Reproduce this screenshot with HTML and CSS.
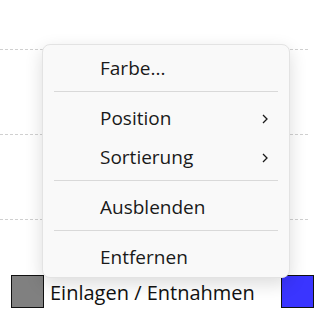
FILE: index.html
```html
<!DOCTYPE html>
<html lang="de">
<head>
    <meta charset="UTF-8">
    <title>Diagramm - Kontextmenü</title>
    <link rel="stylesheet" href="styles.css">
</head>
<body>
    <div class="chart">
        <!-- Plot area with grid lines -->
        <div class="plot">
            <div class="grid-row"></div>
            <div class="grid-row"></div>
            <div class="grid-row last"></div>
        </div>

        <!-- Legend -->
        <div class="legend">
            <div class="legend-item">
                <span class="swatch gray"></span>
                <span class="legend-label">Einlagen / Entnahmen</span>
            </div>
            <div class="legend-item">
                <span class="swatch blue"></span>
            </div>
        </div>

        <!-- Context menu -->
        <div class="context-menu">
            <div class="menu-item">Farbe...</div>
            <div class="menu-sep"></div>
            <div class="menu-item">Position
                <svg class="chevron" width="6" height="10" viewBox="0 0 6 10"><path d="M1 1 L5 5 L1 9" fill="none" stroke="#1a1a1a" stroke-width="1.3"/></svg>
            </div>
            <div class="menu-item">Sortierung
                <svg class="chevron" width="6" height="10" viewBox="0 0 6 10"><path d="M1 1 L5 5 L1 9" fill="none" stroke="#1a1a1a" stroke-width="1.3"/></svg>
            </div>
            <div class="menu-sep"></div>
            <div class="menu-item">Ausblenden</div>
            <div class="menu-sep"></div>
            <div class="menu-item">Entfernen</div>
        </div>
    </div>
</body>
</html>
```

FILE: styles.css
```css
/* General */
body {
    margin: 0;
    background: #fff;
    font-family: "Open Sans", "Noto Sans", sans-serif;
    color: #1a1a1a;
}

.chart {
    position: relative;
    width: 325px;
    height: 319px;
    overflow: hidden;
}

/* Plot grid */
.plot {
    padding-top: 49px;
    width: 308px;
}

.grid-row {
    height: 85px;
    border-top: 1px dashed #d0d0d0;
    box-sizing: border-box;
}

.grid-row.last {
    height: 56px;
}

/* Legend */
.legend {
    display: flex;
    align-items: center;
    gap: 26px;
    padding-left: 11px;
}

.legend-item {
    display: flex;
    align-items: center;
    gap: 6px;
}

.swatch {
    width: 31px;
    height: 31px;
    border: 1px solid #111;
}

.swatch.gray {
    background: #808080;
}

.swatch.blue {
    background: #3a35ff;
}

.legend-label {
    font-size: 20px;
    color: #111;
    padding-top: 2px;
}

/* Context menu */
.context-menu {
    position: absolute;
    left: 42px;
    top: 44px;
    width: 246px;
    padding-top: 4px;
    background: #f9f9f9;
    border: 1px solid #e3e3e3;
    border-radius: 8px;
    box-shadow: 0 6px 18px rgba(0, 0, 0, 0.14);
}

.menu-item {
    height: 39px;
    display: flex;
    align-items: center;
    padding-left: 57px;
    padding-right: 21px;
    font-size: 19px;
    line-height: 1;
    color: #1a1a1a;
}

.chevron {
    margin-left: auto;
}

.menu-sep {
    height: 1px;
    margin: 3px 11px 7px;
    background: #d9d9d9;
}
```
